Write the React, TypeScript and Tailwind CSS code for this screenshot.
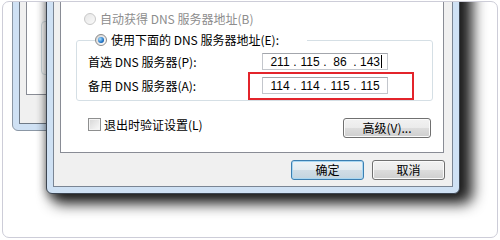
import type { ReactNode } from "react";

function Radio({ checked, disabled }: { checked?: boolean; disabled?: boolean }) {
  return (
    <span
      className={`flex h-[12px] w-[12px] shrink-0 items-center justify-center rounded-full border ${
        disabled
          ? "border-[#c8c8c8] bg-linear-to-br from-[#e6e6e6] to-[#fafafa]"
          : "border-[#8a8a8a] bg-linear-to-br from-[#d2d2d2] to-[#ffffff]"
      }`}
    >
      {checked && (
        <span className="h-[6px] w-[6px] rounded-full bg-[radial-gradient(circle_at_35%_35%,#a8e0ff,#1f74c8_60%,#0c3b73)]" />
      )}
    </span>
  );
}

function Checkbox() {
  return (
    <span className="h-[13px] w-[13px] shrink-0 border border-[#8e8f8f] bg-linear-to-br from-[#d6d6d6] to-[#fbfbfb] shadow-[inset_0_0_0_1px_#f4f4f4]" />
  );
}

function Btn({ children, isDefault, className = "" }: { children: ReactNode; isDefault?: boolean; className?: string }) {
  return (
    <div
      className={`flex h-[20px] items-center justify-center rounded-[3px] border ${
        isDefault
          ? "border-[#3c7fb1] bg-[linear-gradient(#eef3f6,#e4ecf1_50%,#d0dde6_50%,#c3d4df)] shadow-[inset_0_0_0_1px_#a9d7f2]"
          : "border-[#707070] bg-[linear-gradient(#f2f2f2,#ebebeb_50%,#dddddd_50%,#cfcfcf)] shadow-[inset_0_0_0_1px_#fbfbfb]"
      } ${className}`}
    >
      {children}
    </div>
  );
}

function IpBox({ parts, caret }: { parts: string[]; caret?: boolean }) {
  return (
    <div className="flex h-[17px] w-[126px] items-center border border-[#c3c6cc] border-t-[#a3a6ac] bg-white pl-[5px] font-['Liberation_Sans',sans-serif] text-[12px]">
      {parts.map((p, i) => (
        <div key={i} className="flex items-center">
          {i > 0 && <span className="w-[6px] text-center">.</span>}
          <span className="w-[24px] text-center">{p}</span>
        </div>
      ))}
      {caret && <span className="ml-[-1px] h-[13px] w-[1px] bg-black" />}
    </div>
  );
}

export default function App() {
  return (
    <div className="h-[240px] w-[500px] bg-white pl-[2px] pt-[1px] font-['Noto_Sans_CJK_SC','Noto_Sans',sans-serif] text-[12px] leading-[14px] text-black">
      <div className="relative h-[237px] w-[496px] overflow-hidden rounded-[7px] border border-[#cdcdd8] bg-white">
        {/* window behind */}
        <div className="absolute left-[9px] top-[-32px] h-[161px] w-[70px] rounded-b-[6px] border border-[#8b97a5] bg-[#cfe1f4] p-[6px]">
          <div className="h-full border border-[#6f7a87] bg-[#f0f0f0] pl-[6px] pt-[6px]">
            <div className="h-[111px] border border-[#898c95] bg-white pl-[14px] pt-[36px]">
              <div className="h-[54px] rounded-[4px] border border-[#d5dfe5]" />
            </div>
          </div>
        </div>

        {/* front window */}
        <div className="absolute left-[43px] top-[-22px] flex h-[214px] w-[414px] flex-col rounded-b-[6px] border border-[#3d4652] bg-[#cfe1f4] p-[6px] shadow-[9px_6px_14px_4px_rgba(0,0,0,0.85),0_2px_10px_rgba(0,0,0,0.4)]">
          <div className="flex flex-1 flex-col border border-[#7a8594] bg-[#f0f0f0] pl-[6px] pr-[7px] pt-[6px]">
            <div className="mr-[1px] border border-[#898c95] bg-white pb-[14px] pl-[15px] pr-[10px] pt-[17px]">
              <div className="ml-[8px] flex h-[14px] items-center gap-[4px] text-[#8d8d8d]">
                <Radio disabled />
                <span>自动获得 DNS 服务器地址(B)</span>
              </div>

              <fieldset className="mt-[7px] w-[357px] rounded-[3px] border border-[#d5dfe5] pb-[6px] pl-[11px] pt-[6px]">
                <legend className="ml-[7px] flex h-[14px] w-[212px] items-center gap-[4px] bg-white">
                  <Radio checked />
                  <span>使用下面的 DNS 服务器地址(E):</span>
                </legend>
                <div className="flex h-[17px] items-center">
                  <span className="w-[174px]">首选 DNS 服务器(P):</span>
                  <IpBox parts={["211", "115", "86", "143"]} caret />
                </div>
                <div className="relative mt-[7px] flex h-[17px] items-center">
                  <span className="w-[174px]">备用 DNS 服务器(A):</span>
                  <IpBox parts={["114", "114", "115", "115"]} />
                  <div className="absolute left-[160px] top-[-5px] h-[28px] w-[166px] border-2 border-[#e3242b]" />
                </div>
              </fieldset>

              <div className="mt-[17px] flex items-start justify-between">
                <div className="ml-[12px] flex h-[13px] items-center gap-[3px]">
                  <Checkbox />
                  <span>退出时验证设置(L)</span>
                </div>
                <Btn className="mr-[2px] w-[88px]">高级(V)...</Btn>
              </div>
            </div>

            <div className="mt-[7px] flex justify-end gap-[8px]">
              <Btn isDefault className="w-[73px]">确定</Btn>
              <Btn className="w-[73px]">取消</Btn>
            </div>
          </div>
        </div>
      </div>
    </div>
  );
}
